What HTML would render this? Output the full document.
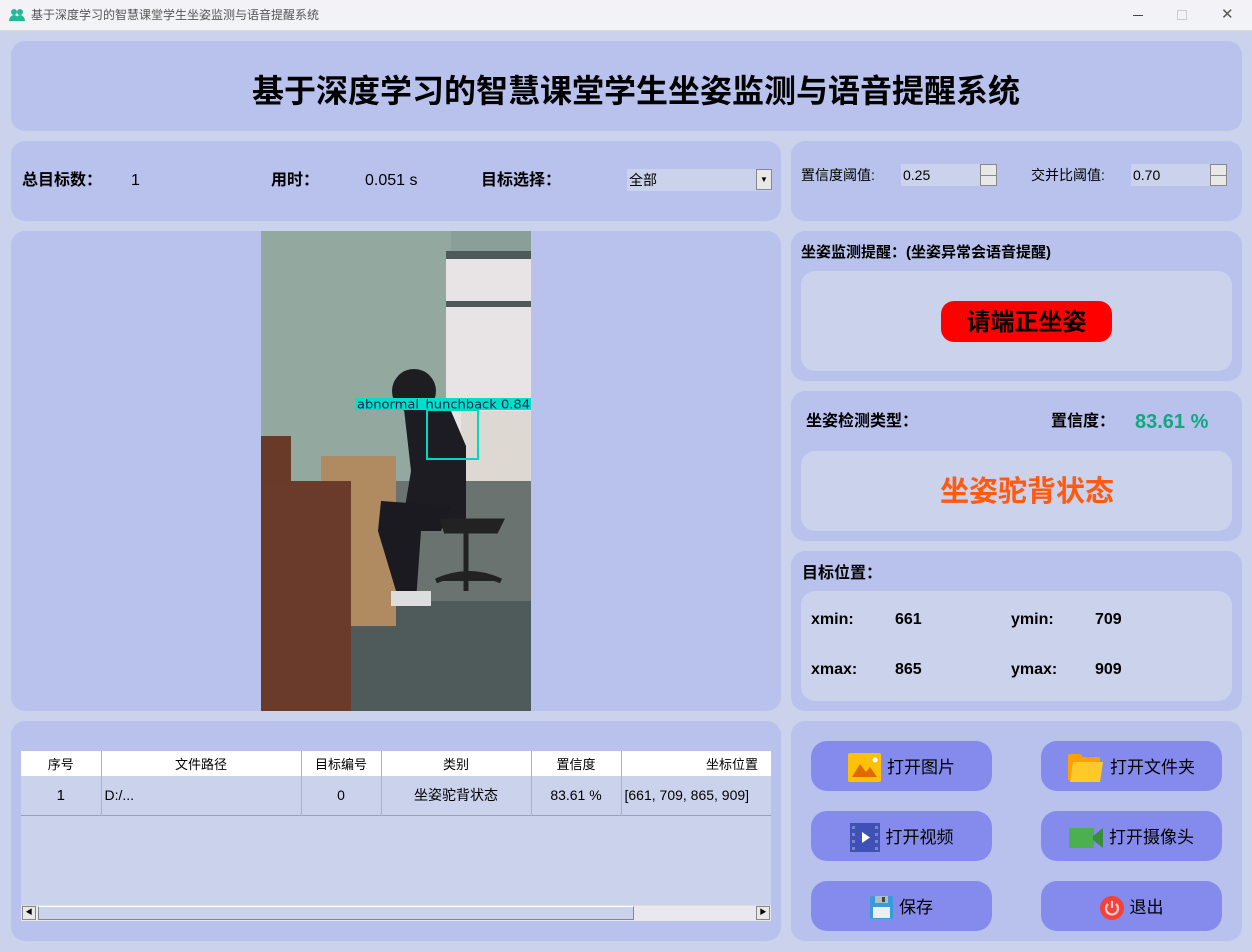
<!DOCTYPE html>
<html><head><meta charset="utf-8"><style>
*{margin:0;padding:0;box-sizing:border-box}
body{width:1252px;height:952px;background:#cbd2ec;font-family:"Liberation Sans","Noto Sans CJK SC",sans-serif;position:relative;overflow:hidden;color:#000}
.a{position:absolute;line-height:20px;white-space:nowrap}
.p{position:absolute;background:#b8c2ec;border-radius:14px}
.in{position:absolute;background:#cbd2ec;border-radius:14px}
.b{font-weight:bold}
.btn{position:absolute;width:181px;height:50px;background:#858bec;border-radius:16px;font-size:17px;display:flex;align-items:center;justify-content:center;gap:6px;line-height:20px;padding-top:3px}
.spin{position:absolute;width:96px;height:22px;background:#cbd2ec;font-size:14px;padding:0 0 0 2px;line-height:22px}
.sb{position:absolute;right:0;top:0;width:17px;height:22px;border:1px solid #888;background:#e8e8e8}
.sb:after{content:"";position:absolute;left:0;right:0;top:10px;border-top:1px solid #888}
td,th{font-weight:normal;font-size:13px;text-align:center;border-right:1px solid #aab0cc}
</style></head><body>
<div class="a" style="left:0;top:0;width:1252px;height:31px;background:#f3f3f7;border-bottom:1px solid #ddd"></div>
<svg class="a" style="left:9px;top:8px" width="16" height="14" viewBox="0 0 16 14"><circle cx="5" cy="4" r="3" fill="#26b896"/><circle cx="11" cy="4" r="3" fill="#26b896"/><path d="M0 13c0-4 3-6 5-6s5 2 5 6zM7 13c0-4 2-6 4-6s5 2 5 6z" fill="#26b896"/></svg>
<div class="a" style="left:31px;top:5px;font-size:12px;color:#555">基于深度学习的智慧课堂学生坐姿监测与语音提醒系统</div>
<div class="a" style="left:1133px;top:15px;width:10px;height:0;border-top:1px solid #444"></div>
<div class="a" style="left:1177px;top:10px;width:10px;height:10px;border:1px solid #ccc"></div>
<div class="a" style="left:1221px;top:5px;font-size:15px;color:#555">✕</div>

<div class="p" style="left:11px;top:41px;width:1231px;height:90px"></div>
<div class="a b" style="left:11px;top:72px;width:1250px;text-align:center;font-size:32px;line-height:38px">基于深度学习的智慧课堂学生坐姿监测与语音提醒系统</div>

<div class="p" style="left:11px;top:141px;width:770px;height:80px"></div>
<div class="a b" style="left:22px;top:171px;font-size:16px">总目标数：</div>
<div class="a" style="left:131px;top:171px;font-size:16px">1</div>
<div class="a b" style="left:271px;top:171px;font-size:16px">用时：</div>
<div class="a" style="left:365px;top:171px;font-size:16px">0.051 s</div>
<div class="a b" style="left:481px;top:171px;font-size:16px">目标选择：</div>
<div class="a" style="left:627px;top:169px;width:145px;height:22px;background:#cbd2ec;font-size:14px;padding:1px 2px">全部</div>
<div class="a" style="left:756px;top:169px;width:16px;height:21px;background:#e8e8e8;border:1px solid #888;font-size:8px;text-align:center;line-height:19px">▼</div>

<div class="p" style="left:791px;top:141px;width:451px;height:80px"></div>
<div class="a" style="left:801px;top:165px;font-size:14px">置信度阈值:</div>
<div class="spin" style="left:901px;top:164px">0.25<div class="sb"></div></div>
<div class="a" style="left:1031px;top:165px;font-size:14px">交并比阈值:</div>
<div class="spin" style="left:1131px;top:164px">0.70<div class="sb"></div></div>

<div class="p" style="left:11px;top:231px;width:770px;height:480px"></div>
<svg class="a" style="left:261px;top:231px" width="270" height="480" viewBox="0 0 270 480">
<rect width="270" height="480" fill="#8a9f97"/>
<rect x="0" y="0" width="190" height="250" fill="#93a89f"/>
<rect x="185" y="25" width="85" height="220" fill="#e8e4e6"/>
<rect x="185" y="20" width="85" height="8" fill="#4e5a58"/>
<rect x="185" y="70" width="85" height="6" fill="#4e5a58"/>
<rect x="200" y="180" width="70" height="70" fill="#ddd8d2"/>
<rect x="0" y="250" width="270" height="230" fill="#4f5a5a"/>
<rect x="100" y="250" width="170" height="120" fill="#6b7370"/>
<rect x="60" y="225" width="75" height="170" fill="#b08a60"/>
<rect x="0" y="250" width="90" height="230" fill="#6a3a2a"/>
<rect x="0" y="205" width="30" height="50" fill="#6a3a28"/>
<ellipse cx="153" cy="160" rx="22" ry="22" fill="#1d1d22"/>
<path d="M143 178 L190 180 L205 215 L205 290 L140 300 L150 240 Z" fill="#1c1c22"/>
<path d="M120 270 L190 275 L180 300 L160 300 L155 370 L138 370 L117 300 Z" fill="#1a1a20"/>
<rect x="130" y="360" width="40" height="15" fill="#ddd"/>
<path d="M182 290 H240 L235 300 H185Z M205 300 V360 M175 350 Q208 335 240 350" stroke="#222" stroke-width="5" fill="#222"/>
<rect x="95" y="167" width="175" height="12" fill="#00e0c8"/>
<text x="96" y="177.5" font-family="DejaVu Sans" font-size="12" textLength="173" lengthAdjust="spacingAndGlyphs" fill="#1a2050">abnormal_hunchback 0.84</text>
<rect x="166" y="179" width="51" height="49" fill="none" stroke="#00d8c0" stroke-width="2"/>
</svg>

<div class="p" style="left:791px;top:231px;width:451px;height:150px"></div>
<div class="a b" style="left:801px;top:243px;font-size:15px">坐姿监测提醒：(坐姿异常会语音提醒)</div>
<div class="in" style="left:801px;top:271px;width:431px;height:100px"></div>
<div class="a b" style="left:941px;top:301px;width:171px;height:41px;background:#f00;border-radius:13px;font-size:24px;text-align:center;line-height:43px">请端正坐姿</div>

<div class="p" style="left:791px;top:391px;width:451px;height:150px"></div>
<div class="a b" style="left:806px;top:412px;font-size:16px">坐姿检测类型：</div>
<div class="a b" style="left:1051px;top:412px;font-size:16px">置信度：</div>
<div class="a b" style="left:1135px;top:411px;font-size:20px;line-height:22px;color:#13a77f">83.61 %</div>
<div class="in" style="left:801px;top:451px;width:431px;height:80px"></div>
<div class="a b" style="left:801px;top:475px;width:452px;text-align:center;font-size:29px;line-height:34px;color:#ff5a10">坐姿驼背状态</div>

<div class="p" style="left:791px;top:551px;width:451px;height:160px"></div>
<div class="a b" style="left:802px;top:564px;font-size:16px">目标位置：</div>
<div class="in" style="left:801px;top:591px;width:431px;height:110px"></div>
<div class="a b" style="left:811px;top:610px;font-size:16px">xmin:</div>
<div class="a b" style="left:895px;top:610px;font-size:16px">661</div>
<div class="a b" style="left:1011px;top:610px;font-size:16px">ymin:</div>
<div class="a b" style="left:1095px;top:610px;font-size:16px">709</div>
<div class="a b" style="left:811px;top:660px;font-size:16px">xmax:</div>
<div class="a b" style="left:895px;top:660px;font-size:16px">865</div>
<div class="a b" style="left:1011px;top:660px;font-size:16px">ymax:</div>
<div class="a b" style="left:1095px;top:660px;font-size:16px">909</div>

<div class="p" style="left:11px;top:721px;width:770px;height:220px"></div>
<div style="position:absolute;left:21px;top:751px;width:750px;height:170px;background:#cbd2ec;overflow:hidden">
<table style="border-collapse:collapse;width:760px">
<tr style="background:#fff;height:25px"><th style="width:80px">序号</th><th style="width:200px">文件路径</th><th style="width:80px">目标编号</th><th style="width:150px">类别</th><th style="width:90px">置信度</th><th style="text-align:right;padding-right:22px">坐标位置</th></tr>
<tr style="height:39px;border-bottom:1px solid #9aa0bc"><td style="font-size:15px">1</td><td style="text-align:left;padding-left:3px;font-size:14px">D:/...</td><td style="font-size:14px">0</td><td style="font-size:14px">坐姿驼背状态</td><td style="font-size:14px">83.61 %</td><td style="font-size:14px;text-align:left;padding-left:3px">[661, 709, 865, 909]</td></tr>
</table>
<div class="a" style="left:0;top:154px;width:750px;height:16px;background:#e8e8ee;border-top:1px solid #ddd"></div>
<div class="a" style="left:17px;top:155px;width:596px;height:14px;background:#cbd2ec;border:1px solid #888;border-top-color:#fff"></div>
<div class="a" style="left:1px;top:155px;width:14px;height:14px;background:#e8e8e8;border:1px solid #888;font-size:7px;text-align:center;line-height:12px">◀</div>
<div class="a" style="left:735px;top:155px;width:14px;height:14px;background:#e8e8e8;border:1px solid #888;font-size:7px;text-align:center;line-height:12px">▶</div>
</div>

<div class="p" style="left:791px;top:721px;width:451px;height:220px"></div>
<div class="btn" style="left:811px;top:741px"><svg width="33" height="29" viewBox="0 0 33 29"><rect width="33" height="29" rx="2" fill="#ffc107"/><path d="M4 24 L12 11 L18 19 L22 14 L29 24Z" fill="#e06a00"/><circle cx="27" cy="7" r="2.5" fill="#fff"/></svg>打开图片</div>
<div class="btn" style="left:1041px;top:741px"><svg width="36" height="28" viewBox="0 0 36 28"><path d="M0 2 Q0 0 2 0 H12 L15 3 H32 V26 H0Z" fill="#ffa000"/><path d="M5 8 H35 L32 28 H2Z" fill="#ffca28"/></svg>打开文件夹</div>
<div class="btn" style="left:811px;top:811px"><svg width="30" height="29" viewBox="0 0 30 29"><rect width="30" height="29" fill="#3f51b5"/><g fill="#7986cb"><rect x="2" y="3" width="3" height="3"/><rect x="2" y="10" width="3" height="3"/><rect x="2" y="17" width="3" height="3"/><rect x="2" y="24" width="3" height="3"/><rect x="25" y="3" width="3" height="3"/><rect x="25" y="10" width="3" height="3"/><rect x="25" y="17" width="3" height="3"/><rect x="25" y="24" width="3" height="3"/></g><path d="M12 9 L20 14.5 L12 20Z" fill="#fff"/></svg>打开视频</div>
<div class="btn" style="left:1041px;top:811px"><svg width="34" height="20" viewBox="0 0 34 20"><rect width="25" height="20" rx="2" fill="#4caf50"/><path d="M24 8 L34 0 V20 L24 12Z" fill="#388e3c"/></svg>打开摄像头</div>
<div class="btn" style="left:811px;top:881px"><svg width="23" height="23" viewBox="0 0 23 23"><rect width="23" height="23" rx="2" fill="#3b9ad8"/><rect x="5" y="0" width="13" height="7" fill="#b0bec5"/><rect x="12" y="1" width="3" height="5" fill="#444"/><rect x="3" y="11" width="17" height="11" fill="#eceff1"/></svg>保存</div>
<div class="btn" style="left:1041px;top:881px"><svg width="24" height="24" viewBox="0 0 24 24"><circle cx="12" cy="12" r="12" fill="#f44336"/><path d="M8 8 A6 6 0 1 0 16 8" stroke="#ffcdd2" stroke-width="2.2" fill="none"/><path d="M12 5 V12" stroke="#ffcdd2" stroke-width="2.2"/></svg>退出</div>
</body></html>
